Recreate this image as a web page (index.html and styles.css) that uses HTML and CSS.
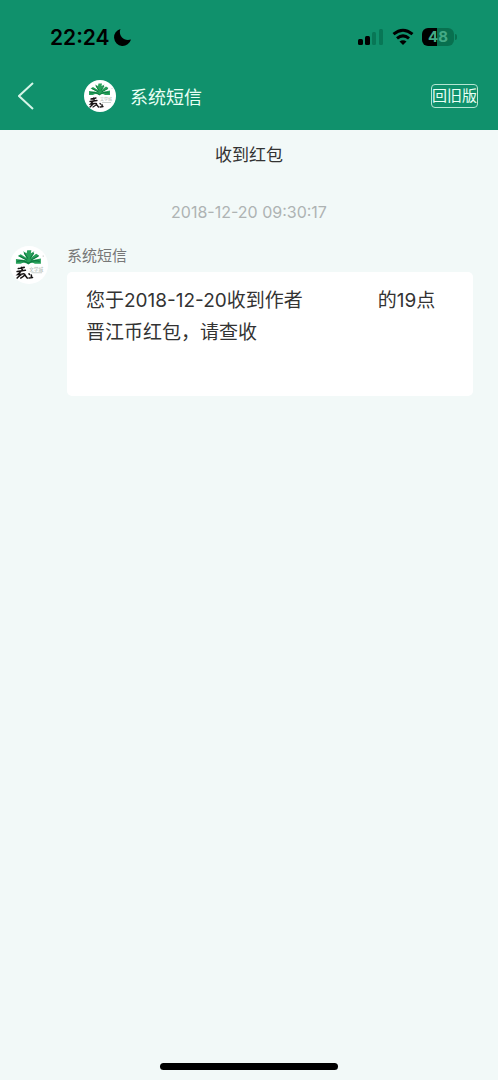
FILE: index.html
```
<!DOCTYPE html>
<html lang="zh-CN">
<head>
<meta charset="utf-8">
<meta name="viewport" content="width=device-width, initial-scale=1">
<title>系统短信</title>
<link rel="stylesheet" href="styles.css">
</head>
<body>
<header class="top">
  <div class="status">
    <div class="clock">
      <span>22:24</span>
      <svg width="18" height="18" viewBox="0 0 18 18" aria-hidden="true"><path d="M6.500 1C4 6.500 9 14 17 11.500A8.600 8.600 0 1 1 6.500 1Z"/></svg>
    </div>
    <div class="indicators">
      <svg width="26" height="18" viewBox="0 0 26 18" aria-hidden="true">
        <rect x="0" y="11" width="5" height="6" rx="1.500"/><rect x="7" y="8" width="5" height="9" rx="1.500"/>
        <rect class="dim" x="14" y="4" width="4" height="13" rx="1.500"/><rect class="dim" x="21" y="1" width="4" height="16" rx="1.500"/>
      </svg>
      <svg width="22" height="18" viewBox="0 0 22 18" aria-hidden="true">
        <path class="wave" d="M1.500 6.200Q11-1.800 20.500 6.200M5 10.400Q11 5.400 17 10.400"/><path d="M7.500 13.500Q11 11 14.500 13.500L11 17Z"/>
      </svg>
      <div class="battery">48</div>
    </div>
  </div>
  <nav class="bar">
    <button class="back" aria-label="返回"><svg width="16" height="28" viewBox="0 0 16 28" aria-hidden="true"><path d="M15 1 1 14 15 27"/></svg></button>
    <svg class="logo logo-small" viewBox="0 0 32 32" aria-hidden="true">
      <path class="leaf" d="M5 15V11L14 12 6.500 8.500 9 7 14 10 11 4.500 14 6 14.500 3.500 18 3.500 17.500 6 20.500 4.500 17.500 10 22 6.500 24.500 8 18 12 26 10.500V15H21Q18 13 15.500 15.500 12 13 9 15Z"/>
      <path class="vein" d="M8 8.500 14.500 12M12 6 15 10.500M20 6 17 10.500M24 8.500 17.500 12M6 13Q11 11 15.500 14.500Q20 11 25 13"/>
      <path class="ink" d="M7 19 12 18M9.500 18 10.500 20.500M6 21.500 13 20.500M9.500 21 6.500 24 10.500 23.500M6 27Q10 23 12 23.500T9 27M12.500 24.500 14.500 27M16 23.500 16.500 24M16 27 19 26.500M18 24.500V26.500"/>
      <text class="mark" x="16" y="21">文学城</text>
      <path class="rule" d="M18 22.500H27M28 8V9"/>
    </svg>
    <h1 class="title">系统短信</h1>
    <button class="old">回旧版</button>
  </nav>
</header>
<main class="thread">
  <h2 class="subject">收到红包</h2>
  <time class="time" datetime="2018-12-20T09:30:17">2018-12-20 09:30:17</time>
  <article class="message">
    <svg class="logo" viewBox="0 0 32 32" aria-hidden="true">
      <path class="leaf" d="M5 15V11L14 12 6.500 8.500 9 7 14 10 11 4.500 14 6 14.500 3.500 18 3.500 17.500 6 20.500 4.500 17.500 10 22 6.500 24.500 8 18 12 26 10.500V15H21Q18 13 15.500 15.500 12 13 9 15Z"/>
      <path class="vein" d="M8 8.500 14.500 12M12 6 15 10.500M20 6 17 10.500M24 8.500 17.500 12M6 13Q11 11 15.500 14.500Q20 11 25 13"/>
      <path class="ink" d="M7 19 12 18M9.500 18 10.500 20.500M6 21.500 13 20.500M9.500 21 6.500 24 10.500 23.500M6 27Q10 23 12 23.500T9 27M12.500 24.500 14.500 27M16 23.500 16.500 24M16 27 19 26.500M18 24.500V26.500"/>
      <text class="mark" x="16" y="21">文学城</text>
      <path class="rule" d="M18 22.500H27M28 8V9"/>
    </svg>
    <div class="content">
      <div class="sender">系统短信</div>
      <p class="bubble">您于2018-12-20收到作者<span class="blank"></span>的19点晋江币红包，请查收</p>
    </div>
  </article>
</main>
<div class="home"></div>
</body>
</html>
```
FILE: styles.css
```
* { box-sizing: border-box; }
body {
  margin: 0;
  min-height: 100vh;
  display: flex;
  flex-direction: column;
  background: #f2f9f8;
  color: #333;
  font-family: Inter, "Noto Sans CJK SC", sans-serif;
}
h1, h2, p { margin: 0; font-weight: 400; }
button { font: inherit; color: inherit; background: none; border: 0; padding: 0; }
.top { height: 130px; background: #10916c; color: #e9fff5; }
.status {
  height: 62px;
  padding: 12px 41px 0 50px;
  display: flex;
  align-items: center;
  justify-content: space-between;
  color: #000;
}
.clock { display: flex; align-items: center; gap: 4px; font-size: 21px; font-weight: 600; }
.indicators { display: flex; align-items: center; gap: 8px; }
.dim { fill: #087756; }
.wave { fill: none; stroke: #000; stroke-width: 3; }
.battery {
  position: relative;
  width: 32px;
  height: 18px;
  margin-right: 3px;
  border-radius: 6px;
  background: linear-gradient(90deg, #000 48%, #08704f 48%);
  color: #43aa86;
  font-size: 15px;
  font-weight: 700;
  line-height: 18px;
  text-align: center;
}
.battery::after {
  content: "";
  position: absolute;
  left: 33px;
  top: 6px;
  width: 2px;
  height: 6px;
  border-radius: 0 2px 2px 0;
  background: #08704f;
}
.bar { height: 68px; padding: 0 20px 0 18px; display: flex; align-items: center; }
.back { width: 66px; height: 44px; display: flex; align-items: center; }
.back path { fill: none; stroke: #d5f5e8; stroke-width: 2; }
.logo { flex: none; width: 38px; height: 38px; border-radius: 50%; background: #fff; }
.logo-small { width: 32px; height: 32px; }
.leaf { fill: #28a05a; }
.vein { fill: none; stroke: #0e7a40; stroke-width: 1; }
.ink { fill: none; stroke: #171313; stroke-width: 1.3; stroke-linecap: round; }
.mark { fill: #aab4ae; font-size: 4px; }
.rule { fill: none; stroke: #cbd1ce; stroke-width: 1; }
.title { flex: 1; margin-left: 14px; font-size: 18px; }
.old {
  height: 24px;
  border: 1px solid #b5e6d3;
  border-radius: 4px;
  font-size: 15px;
  line-height: 20px;
  white-space: nowrap;
}
.thread { flex: 1; display: flex; flex-direction: column; align-items: center; padding-top: 13px; }
.subject { font-size: 17px; line-height: 24px; }
.time { margin-top: 33px; font-size: 16px; line-height: 24px; color: #aeb3b3; }
.message { align-self: stretch; display: flex; gap: 19px; padding: 22px 25px 0 10px; }
.content { flex: 1; }
.sender { font-size: 15px; line-height: 20px; color: #777; }
.bubble {
  margin-top: 6px;
  min-height: 124px;
  padding: 13px 19px;
  border-radius: 5px;
  background: #fff;
  font-size: 19px;
  line-height: 32px;
}
.blank { display: inline-block; width: 75px; }
.home { width: 178px; height: 7px; margin: 0 auto 10px; border-radius: 4px; background: #000; }
```
